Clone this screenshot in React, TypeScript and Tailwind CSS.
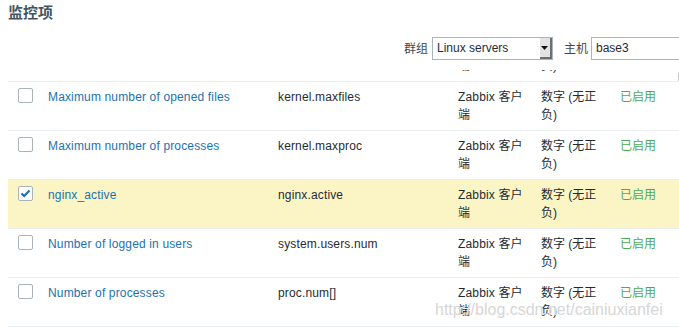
import React from "react"

type Item = {
  name: string
  key: string
  checked?: boolean
}

const items: Item[] = [
  { name: "Maximum number of opened files", key: "kernel.maxfiles" },
  { name: "Maximum number of processes", key: "kernel.maxproc" },
  { name: "nginx_active", key: "nginx.active", checked: true },
  { name: "Number of logged in users", key: "system.users.num" },
  { name: "Number of processes", key: "proc.num[]" },
]

function Checkbox({ checked }: { checked?: boolean }) {
  return (
    <div className="flex h-[15px] w-[15px] items-center justify-center rounded-[2px] border border-[#a9b3ba] bg-white">
      {checked && (
        <svg width="11" height="9" viewBox="0 0 11 9">
          <polyline
            points="1.5,4.5 4.2,7 9.5,1.5"
            fill="none"
            stroke="#1f6fb3"
            strokeWidth="2.2"
          />
        </svg>
      )}
    </div>
  )
}

function Row({ item }: { item: Item }) {
  return (
    <div
      className={
        "grid h-[49px] grid-cols-[40px_230px_180px_83px_79px_1fr] overflow-hidden border-b border-[#ebeef0] pt-[6px] " +
        (item.checked ? "bg-[#fbf5c6]" : "bg-white")
      }
    >
      <div className="pl-[10px]">
        <Checkbox checked={item.checked} />
      </div>
      <div className="tracking-[0.15px] text-[#1b72b0]">{item.name}</div>
      <div className="tracking-[0.15px] text-[#1f2c33]">{item.key}</div>
      <div className="pr-[12px] tracking-[0.15px] text-[#1f2c33]">Zabbix 客户端</div>
      <div className="pr-[10px] text-[#1f2c33]">数字 (无正负)</div>
      <div className="text-[#4caa55]">已启用</div>
    </div>
  )
}

export default function App() {
  return (
    <div
      className="relative flex h-[327px] w-[679px] flex-col overflow-hidden bg-white text-[12px] leading-[18px]"
      style={{ fontFamily: '"Liberation Sans", "Noto Sans CJK SC", sans-serif' }}
    >
      {/* Header */}
      <div className="h-[37px] shrink-0 overflow-hidden pl-[8px] pt-[3px]">
        <h1 className="text-[15px] font-bold leading-[20px] text-[#45555f]">监控项</h1>
      </div>

      {/* Filter */}
      <div className="mr-[-12px] flex h-[23px] shrink-0 items-center justify-end text-[#1f2c33]">
        <span className="mr-[4px] text-[#3d4a52]">群组</span>
        <div className="flex h-[23px] w-[121px] items-stretch border border-[#a9b4bb] bg-white">
          <span className="flex-1 pl-[4px] leading-[21px]">Linux servers</span>
          <div className="flex w-[12px] items-center justify-center border-r-2 border-b-2 border-[#6f6f6f] bg-[#e3e3e3]">
            <svg width="7" height="4" viewBox="0 0 7 4">
              <polygon points="0,0 7,0 3.5,4" fill="#111" />
            </svg>
          </div>
        </div>
        <span className="mr-[3px] ml-[11px] text-[#3d4a52]">主机</span>
        <div className="h-[23px] w-[100px] border border-[#a9b4bb] bg-white pl-[4px] leading-[21px]">
          base3
        </div>
      </div>

      {/* Scrolled-off row remnants */}
      <div className="flex h-[21px] shrink-0 flex-col">
        <div className="mt-[10px] h-[3px] overflow-hidden">
          <div className="-mt-[13px] grid h-[18px] grid-cols-[458px_83px_1fr] text-[#1f2c33]">
            <div />
            <div>端</div>
            <div>负)</div>
          </div>
        </div>
        <div className="ml-auto h-[8px] w-[1px] bg-[#c9c9c9]" />
      </div>

      {/* Table */}
      <div className="ml-[8px] shrink-0 border-t border-[#ebeef0]">
        {items.map((item) => (
          <Row key={item.key} item={item} />
        ))}
      </div>

      {/* Watermark */}
      <div
        className="absolute top-[300px] left-[435px] text-[16px] leading-[20px] text-[#d6d6d6]"
        style={{ fontFamily: '"Liberation Sans", sans-serif', textShadow: "0 0 1px #fff" }}
      >
        http://blog.csdn.net/cainiuxianfei
      </div>
    </div>
  )
}
